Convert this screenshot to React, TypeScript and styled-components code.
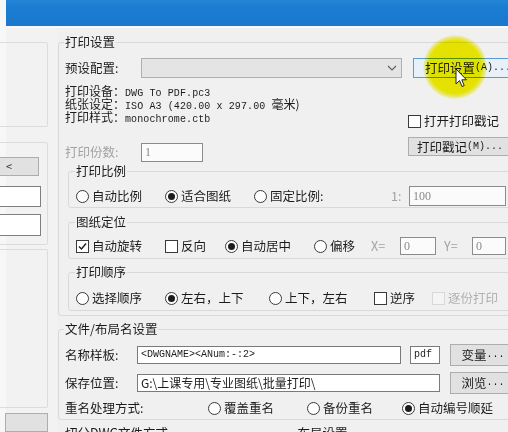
import React from 'react';
import styled, { createGlobalStyle } from 'styled-components';

const GlobalStyle = createGlobalStyle`
  html, body { margin: 0; padding: 0; background: #f0f0f0; }
  body { font-family: "Noto Sans CJK SC", "Noto Sans", sans-serif; }
`;

const Screen = styled.div`
  position: relative;
  width: 508px;
  height: 432px;
  overflow: hidden;
  display: flex;
  background: #f0f0f0;
  color: #1c1c1c;
  font-size: 12px;
  line-height: 14px;
`;

const Edge = styled.div`
  width: 6px;
  flex-shrink: 0;
  background: #f7f7f7;
`;

const Window = styled.div`
  flex: 1;
  min-width: 0;
  display: flex;
  flex-direction: column;
`;

const TitleBar = styled.div`
  height: 26px;
  flex-shrink: 0;
  background: linear-gradient(#2584d6, #1a7cd2 30%, #1978cd);
  border-bottom: 2px solid #f8f8f8;
`;

const Body = styled.div`
  flex: 1;
  display: flex;
  min-height: 0;
`;

const LeftPane = styled.div`
  width: 51px;
  flex-shrink: 0;
  display: flex;
  flex-direction: column;
  padding-top: 14px;
  background: #f2f2f2;
`;

const LeftBox = styled.div<{ $h: number; $mt: number }>`
  margin: ${(p) => p.$mt}px 0 0 -10px;
  width: 52px;
  height: ${(p) => p.$h}px;
  border: 1px solid #dcdcdc;
  border-radius: 2px;
  box-sizing: border-box;
  display: flex;
  flex-direction: column;
`;

const LeftButton = styled.div<{ $mt: number }>`
  margin: ${(p) => p.$mt}px 0 0 -1px;
  width: 43px;
  height: 19px;
  box-sizing: border-box;
  background: #e1e1e1;
  border: 1px solid #adadad;
  font-size: 11px;
  line-height: 17px;
  padding-left: 9px;
  color: #333;
`;

const LeftInput = styled.div<{ $mt: number; $h: number }>`
  margin: ${(p) => p.$mt}px 0 0 -1px;
  width: 45px;
  height: ${(p) => p.$h}px;
  box-sizing: border-box;
  background: #fff;
  border: 1px solid #7f7f7f;
`;

const MainPane = styled.div`
  width: 470px;
  flex-shrink: 0;
  padding: 7px 0 0 1px;
`;

const Group = styled.fieldset<{ $pl: number; $pb: number; $ml?: number; $mt?: number }>`
  margin: ${(p) => p.$mt ?? 0}px 0 0 ${(p) => p.$ml ?? 0}px;
  padding: 0 0 ${(p) => p.$pb}px ${(p) => p.$pl}px;
  border: 1px solid #d9d9d9;
  border-radius: 3px;
  min-width: 0;
`;

const Legend = styled.legend`
  padding: 0 1px;
  margin-left: -1px;
  font-size: 12.5px;
  line-height: 14px;
  color: #1a1a1a;
`;

const Row = styled.div<{ $mt: number; $h: number }>`
  display: flex;
  align-items: center;
  margin-top: ${(p) => p.$mt}px;
  height: ${(p) => p.$h}px;
`;

const Label = styled.div<{ $w: number; $dim?: boolean }>`
  width: ${(p) => p.$w}px;
  flex-shrink: 0;
  font-size: 12.5px;
  color: ${(p) => (p.$dim ? '#a3a3a3' : '#1c1c1c')};
  white-space: nowrap;
`;

const Combo = styled.div`
  width: 261px;
  height: 20px;
  flex-shrink: 0;
  box-sizing: border-box;
  background: #e4e4e4;
  border: 1px solid #b0b0b0;
  display: flex;
  align-items: center;
  justify-content: flex-end;
  padding-right: 4px;
`;

const Button = styled.div<{ $w: number; $h: number; $focus?: boolean; $ml?: number }>`
  width: ${(p) => p.$w}px;
  height: ${(p) => p.$h}px;
  margin-left: ${(p) => p.$ml ?? 0}px;
  flex-shrink: 0;
  box-sizing: border-box;
  background: ${(p) => (p.$focus ? '#e8f1fa' : '#e1e1e1')};
  border: 1px solid ${(p) => (p.$focus ? '#5b9bd5' : '#adadad')};
  display: flex;
  align-items: center;
  justify-content: center;
  font-size: 12.5px;
  white-space: nowrap;
  color: #1c1c1c;
`;

const Small = styled.span`
  font-family: "Liberation Mono", monospace;
  font-size: 10px;
`;

const InfoGrid = styled.div`
  display: grid;
  grid-template-columns: 343px 1fr;
  margin-top: 6px;
`;

const InfoCol = styled.div<{ $pt?: number }>`
  display: flex;
  flex-direction: column;
  padding-top: ${(p) => p.$pt ?? 0}px;
`;

const InfoLine = styled.div`
  height: 13px;
  line-height: 13px;
  font-size: 12px;
  white-space: nowrap;
  overflow: visible;
`;

const Mono = styled.span`
  font-family: "Liberation Mono", monospace;
  font-size: 10px;
  letter-spacing: 0.1px;
`;

const TextBox = styled.div<{ $w: number; $h: number; $dim?: boolean; $mono?: boolean; $ml?: number }>`
  width: ${(p) => p.$w}px;
  height: ${(p) => p.$h}px;
  margin-left: ${(p) => p.$ml ?? 0}px;
  flex-shrink: 0;
  box-sizing: border-box;
  background: ${(p) => (p.$dim ? '#fbfbfb' : '#ffffff')};
  border: 1px solid ${(p) => (p.$dim ? '#8c8c8c' : '#7a7a7a')};
  padding-left: 3px;
  display: flex;
  align-items: center;
  overflow: hidden;
  white-space: nowrap;
  color: ${(p) => (p.$dim ? '#8a8a8a' : '#1c1c1c')};
  font-family: ${(p) => (p.$mono ? '"Liberation Mono", monospace' : '"Liberation Serif", "Noto Sans CJK SC", serif')};
  font-size: ${(p) => (p.$mono ? '10px' : '12px')};
`;

const PathText = styled.span`
  font-family: "Noto Sans CJK SC", sans-serif;
  font-size: 12px;
`;

const Option = styled.div<{ $w?: number; $dim?: boolean }>`
  width: ${(p) => (p.$w ? `${p.$w}px` : 'auto')};
  flex-shrink: 0;
  display: flex;
  align-items: center;
  gap: 3px;
  font-size: 12.5px;
  white-space: nowrap;
  color: ${(p) => (p.$dim ? '#b0b0b0' : '#1c1c1c')};
`;

const RadioMark = styled.span<{ $on?: boolean }>`
  width: 13px;
  height: 13px;
  box-sizing: border-box;
  border-radius: 50%;
  border: 1px solid #3a3a3a;
  background: #fff;
  display: flex;
  align-items: center;
  justify-content: center;
  flex-shrink: 0;
  &::after {
    content: '';
    display: ${(p) => (p.$on ? 'block' : 'none')};
    width: 7px;
    height: 7px;
    border-radius: 50%;
    background: #1c1c1c;
  }
`;

const CheckMark = styled.span<{ $dim?: boolean }>`
  width: 13px;
  height: 13px;
  box-sizing: border-box;
  border: 1px solid ${(p) => (p.$dim ? '#d8d8d8' : '#3a3a3a')};
  background: ${(p) => (p.$dim ? '#f4f4f4' : '#fff')};
  display: flex;
  align-items: center;
  justify-content: center;
  flex-shrink: 0;
`;

const Highlight = styled.div`
  position: absolute;
  left: 423px;
  top: 35px;
  width: 64px;
  height: 64px;
  border-radius: 50%;
  background: radial-gradient(circle, #f2ee00 0%, #f4f000 58%, rgba(246, 242, 40, 0.6) 66%, rgba(246, 242, 40, 0) 72%);
  mix-blend-mode: multiply;
  pointer-events: none;
`;

const Cursor = styled.svg`
  position: absolute;
  left: 455px;
  top: 68px;
`;

const BottomRow = styled.div`
  display: flex;
  gap: 10px;
  margin-top: 6px;
`;

const Radio = ({ on, w, children }: { on?: boolean; w?: number; children: React.ReactNode }) => (
  <Option $w={w}>
    <RadioMark $on={on} />
    {children}
  </Option>
);

const Check = ({ on, w, dim, children }: { on?: boolean; w?: number; dim?: boolean; children: React.ReactNode }) => (
  <Option $w={w} $dim={dim}>
    <CheckMark $dim={dim}>
      {on && (
        <svg width="9" height="9" viewBox="0 0 9 9">
          <path d="M1 4.5 L3.5 7 L8 1.5" fill="none" stroke="#1c1c1c" strokeWidth="1.4" />
        </svg>
      )}
    </CheckMark>
    {children}
  </Option>
);

export default function App() {
  return (
    <>
      <GlobalStyle />
      <Screen>
        <Edge />
        <Window>
          <TitleBar />
          <Body>
            <LeftPane>
              <LeftBox $h={86} $mt={0} />
              <LeftBox $h={105} $mt={15}>
                <LeftButton $mt={14}>&lt;</LeftButton>
                <LeftInput $mt={10} $h={21} />
                <LeftInput $mt={7} $h={22} />
              </LeftBox>
              <LeftBox $h={161} $mt={4} />
              <LeftButton $mt={5}> </LeftButton>
            </LeftPane>

            <MainPane>
              <Group $pl={6} $pb={4}>
                <Legend>打印设置</Legend>
                <Row $mt={9} $h={20}>
                  <Label $w={76}>预设配置:</Label>
                  <Combo>
                    <svg width="10" height="6" viewBox="0 0 10 6">
                      <path d="M1 1 L5 5 L9 1" fill="none" stroke="#606060" strokeWidth="1.2" />
                    </svg>
                  </Combo>
                  <Button $w={110} $h={20} $ml={11} $focus>
                    打印设置<Small>(A)...</Small>
                  </Button>
                </Row>

                <InfoGrid>
                  <InfoCol>
                    <InfoLine>
                      打印设备：<Mono>DWG To PDF.pc3</Mono>
                    </InfoLine>
                    <InfoLine>
                      纸张设定：<Mono>ISO A3 (420.00 x 297.00 </Mono>毫米)
                    </InfoLine>
                    <InfoLine>
                      打印样式：<Mono>monochrome.ctb</Mono>
                    </InfoLine>
                    <Row $mt={19} $h={20}>
                      <Label $w={76} $dim>
                        打印份数:
                      </Label>
                      <TextBox $w={62} $h={19} $dim>
                        1
                      </TextBox>
                    </Row>
                  </InfoCol>
                  <InfoCol $pt={30}>
                    <Check>打开打印戳记</Check>
                    <Row $mt={9} $h={19}>
                      <Button $w={104} $h={19}>
                        打印戳记<Small>(M)...</Small>
                      </Button>
                    </Row>
                  </InfoCol>
                </InfoGrid>

                <Group $pl={7} $pb={1} $ml={3} $mt={2}>
                  <Legend>打印比例</Legend>
                  <Row $mt={8} $h={20}>
                    <Radio w={89}>自动比例</Radio>
                    <Radio w={89} on>
                      适合图纸
                    </Radio>
                    <Radio w={137}>固定比例:</Radio>
                    <Label $w={18} $dim>
                      1:
                    </Label>
                    <TextBox $w={97} $h={20} $dim>
                      100
                    </TextBox>
                  </Row>
                </Group>

                <Group $pl={7} $pb={3} $ml={3} $mt={7}>
                  <Legend>图纸定位</Legend>
                  <Row $mt={8} $h={18}>
                    <Check w={89} on>
                      自动旋转
                    </Check>
                    <Check w={60}>反向</Check>
                    <Radio w={89} on>
                      自动居中
                    </Radio>
                    <Radio w={57}>偏移</Radio>
                    <Label $w={29} $dim>
                      X=
                    </Label>
                    <TextBox $w={36} $h={18} $dim>
                      0
                    </TextBox>
                    <Label $w={28} $dim style={{ marginLeft: 8 }}>
                      Y=
                    </Label>
                    <TextBox $w={34} $h={18} $dim>
                      0
                    </TextBox>
                  </Row>
                </Group>

                <Group $pl={7} $pb={4} $ml={3} $mt={6}>
                  <Legend>打印顺序</Legend>
                  <Row $mt={11} $h={16}>
                    <Radio w={89}>选择顺序</Radio>
                    <Radio w={104} on>
                      左右，上下
                    </Radio>
                    <Radio w={105}>上下，左右</Radio>
                    <Check w={58}>逆序</Check>
                    <Check dim>逐份打印</Check>
                  </Row>
                </Group>
              </Group>

              <Group $pl={6} $pb={3} $mt={6}>
                <Legend>文件/布局名设置</Legend>
                <Row $mt={8} $h={22}>
                  <Label $w={72}>名称样板:</Label>
                  <TextBox $w={264} $h={18} $mono>
                    &lt;DWGNAME&gt;&lt;ANum:-:2&gt;
                  </TextBox>
                  <TextBox $w={30} $h={18} $mono $ml={9}>
                    pdf
                  </TextBox>
                  <Button $w={66} $h={22} $ml={10}>
                    变量<Small>...</Small>
                  </Button>
                </Row>
                <Row $mt={6} $h={22}>
                  <Label $w={72}>保存位置:</Label>
                  <TextBox $w={303} $h={18}>
                    <PathText>G:\上课专用\专业图纸\批量打印\</PathText>
                  </TextBox>
                  <Button $w={66} $h={22} $ml={10}>
                    浏览<Small>...</Small>
                  </Button>
                </Row>
                <Row $mt={6} $h={16}>
                  <Label $w={143}>重名处理方式:</Label>
                  <Radio w={99}>覆盖重名</Radio>
                  <Radio w={95}>备份重名</Radio>
                  <Radio on>自动编号顺延</Radio>
                </Row>
              </Group>

              <BottomRow>
                <Group $pl={6} $pb={20} style={{ width: 215 }}>
                  <Legend>切分DWG文件方式</Legend>
                </Group>
                <Group $pl={6} $pb={20} style={{ width: 230 }}>
                  <Legend>布局设置</Legend>
                </Group>
              </BottomRow>
            </MainPane>
          </Body>
        </Window>

        <Highlight />
        <Cursor width="13" height="20" viewBox="0 0 13 20">
          <path
            d="M1 1 L1 16 L4.5 12.5 L7 18.5 L9.2 17.6 L6.8 11.8 L11.5 11.8 Z"
            fill="#ffffff"
            stroke="#222"
            strokeWidth="1"
            strokeLinejoin="round"
          />
        </Cursor>
      </Screen>
    </>
  );
}
